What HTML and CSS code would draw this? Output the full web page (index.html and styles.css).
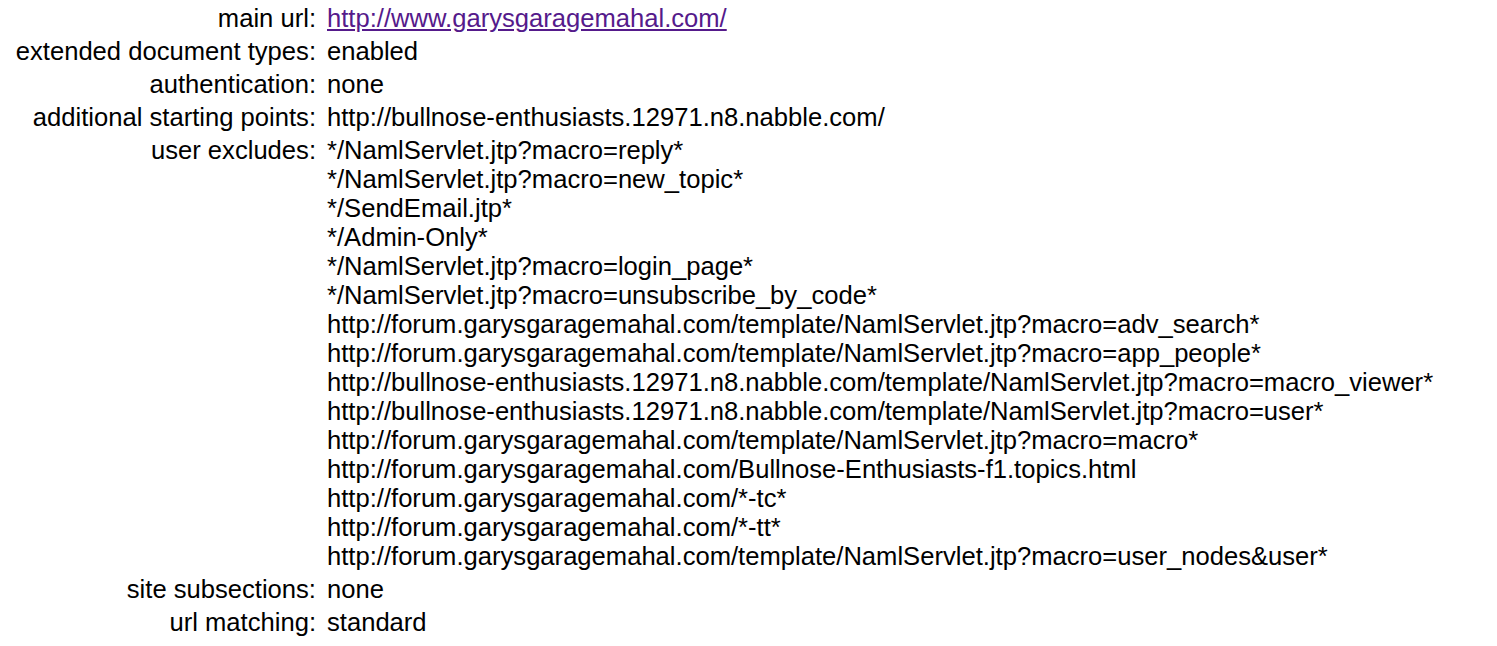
FILE: index.html
```html
<!DOCTYPE html>
<html>
<head>
<meta charset="utf-8">
<link rel="stylesheet" href="styles.css">
</head>
<body>
<div class="info">
  <div class="label">main url:</div>
  <div class="value"><a class="visited" href="#">http://www.garysgaragemahal.com/</a></div>

  <div class="label">extended document types:</div>
  <div class="value">enabled</div>

  <div class="label">authentication:</div>
  <div class="value">none</div>

  <div class="label">additional starting points:</div>
  <div class="value">http://bullnose-enthusiasts.12971.n8.nabble.com/</div>

  <div class="label">user excludes:</div>
  <div class="value">
    <div>*/NamlServlet.jtp?macro=reply*</div>
    <div>*/NamlServlet.jtp?macro=new_topic*</div>
    <div>*/SendEmail.jtp*</div>
    <div>*/Admin-Only*</div>
    <div>*/NamlServlet.jtp?macro=login_page*</div>
    <div>*/NamlServlet.jtp?macro=unsubscribe_by_code*</div>
    <div>http://forum.garysgaragemahal.com/template/NamlServlet.jtp?macro=adv_search*</div>
    <div>http://forum.garysgaragemahal.com/template/NamlServlet.jtp?macro=app_people*</div>
    <div>http://bullnose-enthusiasts.12971.n8.nabble.com/template/NamlServlet.jtp?macro=macro_viewer*</div>
    <div>http://bullnose-enthusiasts.12971.n8.nabble.com/template/NamlServlet.jtp?macro=user*</div>
    <div>http://forum.garysgaragemahal.com/template/NamlServlet.jtp?macro=macro*</div>
    <div>http://forum.garysgaragemahal.com/Bullnose-Enthusiasts-f1.topics.html</div>
    <div>http://forum.garysgaragemahal.com/*-tc*</div>
    <div>http://forum.garysgaragemahal.com/*-tt*</div>
    <div>http://forum.garysgaragemahal.com/template/NamlServlet.jtp?macro=user_nodes&amp;user*</div>
  </div>

  <div class="label">site subsections:</div>
  <div class="value">none</div>

  <div class="label">url matching:</div>
  <div class="value">standard</div>
</div>
</body>
</html>
```
FILE: styles.css
```css
html, body {
  margin: 0;
  padding: 0;
  background: #ffffff;
}
body {
  font-family: "Liberation Sans", Arial, sans-serif;
  font-size: 25.6px;
  line-height: 29px;
  color: #000000;
}
.info {
  display: grid;
  grid-template-columns: 316px auto;
  column-gap: 11px;
  row-gap: 4px;
  padding-top: 4px;
  justify-content: start;
}
.label {
  text-align: right;
  white-space: nowrap;
}
.value {
  white-space: nowrap;
}
.visited {
  color: #551a8b;
  text-decoration: underline;
}
```
